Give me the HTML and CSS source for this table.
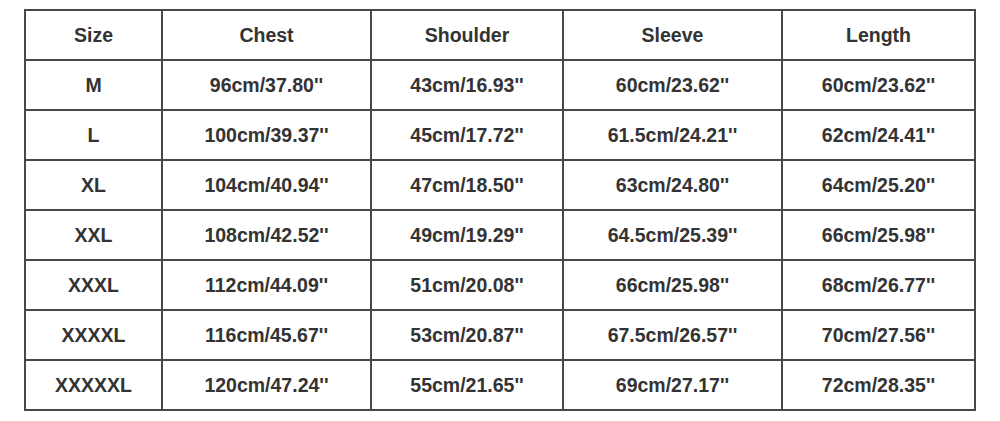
FILE: index.html
```html
<!DOCTYPE html>
<html>
<head>
<meta charset="utf-8">
<link rel="stylesheet" href="styles.css">
</head>
<body>
<table class="size-table">
  <colgroup>
    <col class="c-size">
    <col class="c-chest">
    <col class="c-shoulder">
    <col class="c-sleeve">
    <col class="c-length">
  </colgroup>
  <tr><td>Size</td><td>Chest</td><td>Shoulder</td><td>Sleeve</td><td>Length</td></tr>
  <tr><td>M</td><td>96cm/37.80''</td><td>43cm/16.93''</td><td>60cm/23.62''</td><td>60cm/23.62''</td></tr>
  <tr><td>L</td><td>100cm/39.37''</td><td>45cm/17.72''</td><td>61.5cm/24.21''</td><td>62cm/24.41''</td></tr>
  <tr><td>XL</td><td>104cm/40.94''</td><td>47cm/18.50''</td><td>63cm/24.80''</td><td>64cm/25.20''</td></tr>
  <tr><td>XXL</td><td>108cm/42.52''</td><td>49cm/19.29''</td><td>64.5cm/25.39''</td><td>66cm/25.98''</td></tr>
  <tr><td>XXXL</td><td>112cm/44.09''</td><td>51cm/20.08''</td><td>66cm/25.98''</td><td>68cm/26.77''</td></tr>
  <tr><td>XXXXL</td><td>116cm/45.67''</td><td>53cm/20.87''</td><td>67.5cm/26.57''</td><td>70cm/27.56''</td></tr>
  <tr><td>XXXXXL</td><td>120cm/47.24''</td><td>55cm/21.65''</td><td>69cm/27.17''</td><td>72cm/28.35''</td></tr>
</table>
</body>
</html>
```
FILE: styles.css
```css
html, body {
  margin: 0;
  padding: 0;
  background: #ffffff;
}
body {
  padding: 9px 0 0 24px;
}
.size-table {
  border-collapse: collapse;
  table-layout: fixed;
  width: 950px;
  font-family: "Liberation Sans", Arial, sans-serif;
  font-weight: bold;
  font-size: 19.5px;
  color: #333333;
}
.c-size { width: 137px; }
.c-chest { width: 209px; }
.c-shoulder { width: 192px; }
.c-sleeve { width: 219px; }
.c-length { width: 193px; }
.size-table td {
  border: 2px solid #484848;
  height: 47px;
  padding: 1px 0 0 0;
  text-align: center;
  vertical-align: middle;
}
```
